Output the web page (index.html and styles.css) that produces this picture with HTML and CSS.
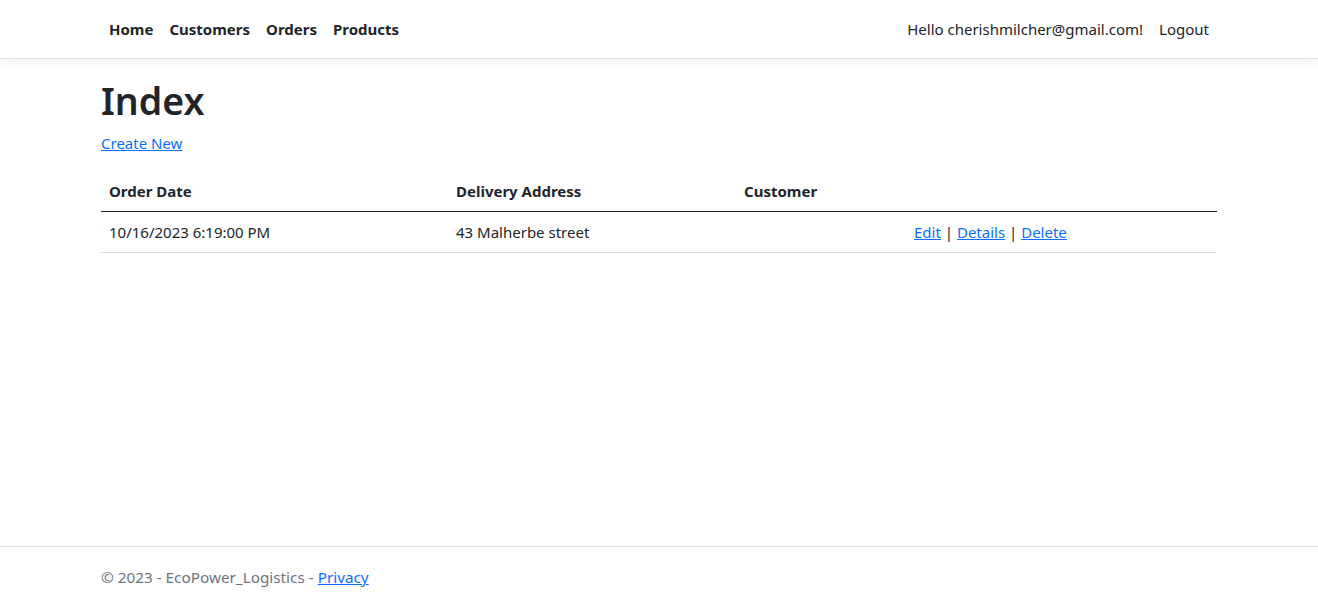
FILE: index.html
```html
<!DOCTYPE html>
<html lang="en">
<head>
<meta charset="utf-8">
<title>Index - EcoPower_Logistics</title>
<link rel="stylesheet" href="styles.css">
</head>
<body>
<div class="page">
  <header class="navbar">
    <div class="container nav-inner">
      <ul class="nav-left">
        <li><a class="nav-link bold" href="#">Home</a></li>
        <li><a class="nav-link bold" href="#">Customers</a></li>
        <li><a class="nav-link bold" href="#">Orders</a></li>
        <li><a class="nav-link bold" href="#">Products</a></li>
      </ul>
      <ul class="nav-right">
        <li><a class="nav-link" href="#">Hello cherishmilcher@gmail.com!</a></li>
        <li><button class="nav-link btn-link" type="button">Logout</button></li>
      </ul>
    </div>
  </header>
  <main class="container main">
    <h1 class="title">Index</h1>
    <p class="create"><a href="#">Create New</a></p>
    <table class="table">
      <colgroup>
        <col class="c1"><col class="c2"><col class="c3"><col class="c4">
      </colgroup>
      <thead>
        <tr><th>Order Date</th><th>Delivery Address</th><th>Customer</th><th></th></tr>
      </thead>
      <tbody>
        <tr>
          <td>10/16/2023 6:19:00 PM</td>
          <td>43 Malherbe street</td>
          <td></td>
          <td class="actions"><a href="#">Edit</a> | <a href="#">Details</a> | <a href="#">Delete</a></td>
        </tr>
      </tbody>
    </table>
  </main>
  <footer class="footer">
    <div class="container">&copy; 2023 - EcoPower_Logistics - <a href="#">Privacy</a></div>
  </footer>
</div>
</body>
</html>
```
FILE: styles.css
```css
* { box-sizing: border-box; }
html, body { margin: 0; padding: 0; }
body {
  font-family: "Noto Sans", "Open Sans", sans-serif;
  font-size: 15px;
  line-height: 24px;
  color: #212529;
  background: #fff;
}
a { color: #0d6efd; text-decoration: underline; }
.page { min-height: 100vh; display: flex; flex-direction: column; }
.container { width: 1140px; margin: 0 auto; padding: 0 12px; }
.navbar {
  padding: 9px 0;
  border-bottom: 1px solid #dee2e6;
  box-shadow: 0 4px 12px rgba(0,0,0,.05);
  background: #fff;
  margin-bottom: 16px;
}
.nav-inner { display: flex; justify-content: space-between; align-items: center; }
.nav-left, .nav-right { list-style: none; margin: 0; padding: 0; display: flex; }
.nav-link {
  display: block;
  padding: 8px;
  color: #212529;
  text-decoration: none;
  font: inherit;
  line-height: 24px;
}
.bold { font-weight: 700; }
.btn-link { background: none; border: 0; cursor: pointer; }
.title { font-size: 37.5px; font-weight: 600; line-height: 48px; margin: 0 0 6px; padding-top: 2px; }
.create { margin: 0 0 16px; }
.table { width: 100%; border-collapse: collapse; table-layout: fixed; margin: 0 0 16px; }
.c1 { width: 347px; } .c2 { width: 288px; } .c3 { width: 170px; } .c4 { width: auto; }
.table th, .table td { padding: 8px; text-align: left; vertical-align: top; }
.table th { font-weight: 700; border-bottom: 1px solid #212529; }
.table td { border-bottom: 1px solid #dee2e6; }
.main { flex: 1; }
.footer {
  border-top: 1px solid #dee2e6;
  line-height: 60px;
  color: #6c757d;
  white-space: nowrap;
  font-size: 15.3px;
}
```
